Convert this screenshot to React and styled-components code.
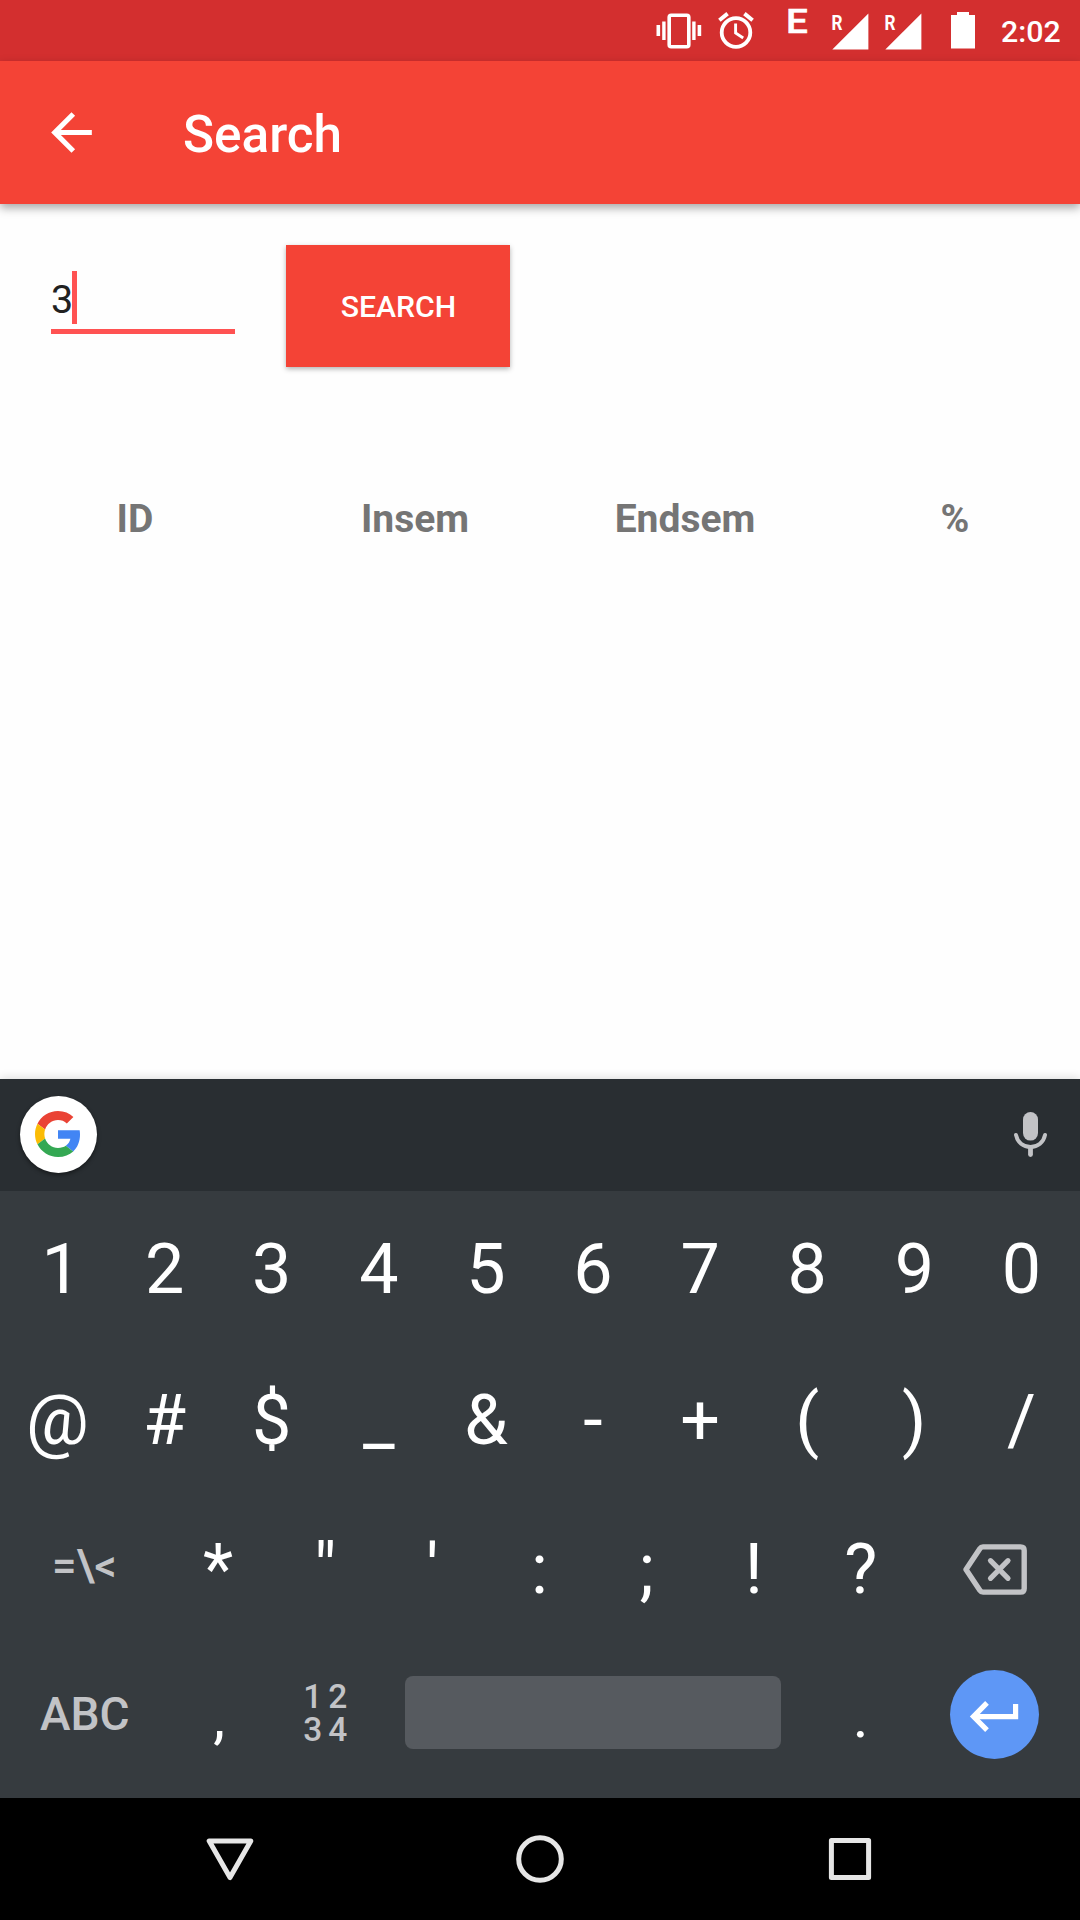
import React from "react";
import styled, { createGlobalStyle } from "styled-components";

const GlobalStyle = createGlobalStyle`
  * { box-sizing: border-box; }
  body { margin: 0; background: #fefefe; }
  svg { display: block; flex: none; overflow: visible; }
`;

const Screen = styled.div`
  width: 1080px;
  height: 1920px;
  display: flex;
  flex-direction: column;
  overflow: hidden;
  background: #fefefe;
  font-family: Roboto, "Noto Sans", sans-serif;
`;

const StatusBar = styled.header`
  height: 61px;
  flex: none;
  display: flex;
  justify-content: flex-end;
  align-items: flex-start;
  padding-right: 20px;
  background: #d32f2f;
  color: #fff;
`;

const StatusItem = styled.div`
  margin-left: ${(p) => p.$gap}px;
  padding-top: ${(p) => p.$top}px;
`;

const NetworkType = styled(StatusItem)`
  width: 22px;
  font-size: 34px;
  line-height: 40px;
  font-weight: 500;
  transform: scaleX(1.14);
  transform-origin: left;
  -webkit-text-stroke: 0.5px #fff;
`;

const Clock = styled(StatusItem)`
  width: 59px;
  font-size: 30.3px;
  line-height: 36px;
  font-weight: 500;
  white-space: nowrap;
`;

const AppBar = styled.div`
  height: 143px;
  flex: none;
  display: flex;
  align-items: center;
  padding-left: 41px;
  background: #f44336;
  color: #fff;
  box-shadow: 0 4px 9px rgba(0, 0, 0, 0.34);
`;

const Title = styled.h1`
  margin: 5px 0 0 81px;
  font-size: 51.3px;
  line-height: 60px;
  font-weight: 500;
`;

const Content = styled.main`
  flex: 1;
  display: flex;
  flex-direction: column;
  padding-top: 41px;
`;

const SearchRow = styled.div`
  display: flex;
  align-items: flex-start;
  padding-left: 51px;
`;

const Field = styled.div`
  width: 184px;
  height: 63px;
  margin: 26px 51px 0 0;
  display: flex;
  align-items: flex-start;
  border-bottom: 5px solid #ff5252;
  color: #212121;
  font-size: 39.5px;
  line-height: 57px;
`;

const Caret = styled.span`
  width: 5px;
  height: 53px;
  margin-left: -1px;
  background: #ff5252;
`;

const SearchButton = styled.button`
  width: 224px;
  height: 122px;
  padding: 2px 0 0 1px;
  border: 0;
  background: #f44336;
  color: #fff;
  font: 500 30.2px/36px Roboto, "Noto Sans", sans-serif;
  box-shadow: 0 2px 5px rgba(0, 0, 0, 0.3);
`;

const TableHead = styled.div`
  display: grid;
  grid-template-columns: repeat(4, 270px);
  margin-top: 129px;
  color: #757575;
  font-size: 39px;
  line-height: 46px;
  font-weight: 700;
  text-align: center;
`;

const HeadCell = styled.div`
  padding-left: ${(p) => (p.$first ? 0 : 20)}px;
`;

const Keyboard = styled.section`
  height: 719px;
  flex: none;
  display: flex;
  flex-direction: column;
  background: #363b3f;
  box-shadow: 0 -1px 9px rgba(0, 0, 0, 0.14);
  color: #fff;
`;

const Suggestions = styled.div`
  height: 112px;
  display: flex;
  align-items: center;
  justify-content: space-between;
  padding: 0 33px 1px 20px;
  background: #292e32;
`;

const GoogleButton = styled.div`
  width: 77px;
  height: 77px;
  display: grid;
  place-items: center;
  padding: 0 1px 1px 0;
  border-radius: 50%;
  background: #fff;
  box-shadow: 0 2px 4px rgba(0, 0, 0, 0.45);
`;

const Keys = styled.div`
  padding: 3px 0 0 4px;
`;

const KeyRow = styled.div`
  display: grid;
  grid-template-columns: repeat(20, 53.55px);
  grid-template-rows: ${(p) => p.$height || 150}px;
`;

const Key = styled.div`
  grid-column: span ${(p) => p.$span || 2};
  min-width: 0;
  display: flex;
  align-items: center;
  justify-content: center;
  padding-top: ${(p) => p.$drop || 0}px;
  padding-bottom: ${(p) => p.$lift || 0}px;
  padding-left: ${(p) => p.$shift || 0}px;
  font-size: ${(p) => p.$size || 70}px;
  font-weight: ${(p) => (p.$soft ? 500 : 400)};
  color: ${(p) => (p.$soft ? "#c2c3c6" : "#fff")};
  line-height: 1.172;
`;

const NumpadGlyph = styled.div`
  display: grid;
  grid-template-columns: 25px 19px;
  grid-auto-rows: 33.5px;
  line-height: 33.5px;
  font-size: 33.5px;
`;

const SpaceBar = styled.div`
  width: 376px;
  height: 73px;
  border-radius: 8px;
  background: #565a5f;
`;

const EnterButton = styled.div`
  width: 89px;
  height: 89px;
  display: grid;
  place-items: center;
  border-radius: 50%;
  background: #5e97f6;
`;

const EnterGlyph = styled.div`
  padding: 5px 1px 0 0;
`;

const NavBar = styled.nav`
  height: 122px;
  flex: none;
  display: grid;
  grid-template-columns: repeat(3, 310px);
  justify-content: center;
  align-items: center;
  justify-items: center;
  background: #000;
`;

const VibrateIcon = () => (
  <svg width="46" height="36" viewBox="0 0 46 36" fill="#fff">
    <rect x="13.2" y="2.2" width="19.6" height="31.6" rx="2" fill="none" stroke="#fff" strokeWidth="3.6" />
    <path d="M0.5 12h3.6v11H0.5zM6.2 8.5h3.4v18.5H6.2zM36.2 8.5h3.4v18.5h-3.4zM41.6 12h3.6v11h-3.6z" />
  </svg>
);

const AlarmIcon = () => (
  <svg width="36" height="37" viewBox="0 0 36 37" fill="none" stroke="#fff">
    <circle cx="18" cy="20.5" r="14.3" strokeWidth="3.8" />
    <path d="M1.4 8.2 9.6 1.6M34.6 8.2 26.4 1.6" strokeWidth="4" />
    <path d="M17.6 11.5v9.5l7.6 5" strokeWidth="2.9" />
  </svg>
);

const SignalIcon = () => (
  <svg width="37" height="37" viewBox="0 0 37 37" fill="#fff">
    <path d="M36.4 .5V36.6H.3z" />
    <text transform="translate(-0.6 17) scale(.84 1)" fontFamily="Roboto, sans-serif" fontSize="20.5" fontWeight="700">R</text>
  </svg>
);

const BatteryIcon = () => (
  <svg width="24" height="37" viewBox="0 0 24 37" fill="#fff">
    <path d="M6 0h12v3h6v33.6H0V3h6z" />
  </svg>
);

const BackIcon = () => (
  <svg width="61" height="61" viewBox="0 0 24 24" fill="#fff">
    <path d="M20 11H7.83l5.59-5.59L12 4l-8 8 8 8 1.41-1.41L7.83 13H20v-2z" />
  </svg>
);

const GoogleIcon = () => (
  <svg width="46" height="46" viewBox="0 0 48 48">
    <path fill="#ea4335" d="M24 9.5c3.54 0 6.71 1.22 9.21 3.6l6.85-6.85C35.9 2.38 30.47 0 24 0 14.62 0 6.51 5.38 2.56 13.22l7.98 6.19C12.43 13.72 17.74 9.5 24 9.5z" />
    <path fill="#4285f4" d="M46.98 24.55c0-1.57-.15-3.09-.38-4.55H24v9.02h12.94c-.58 2.96-2.26 5.48-4.78 7.18l7.73 6c4.51-4.18 7.09-10.36 7.09-17.65z" />
    <path fill="#fbbc05" d="M10.53 28.59c-.48-1.45-.76-2.99-.76-4.59s.27-3.14.76-4.59l-7.98-6.19C.92 16.46 0 20.12 0 24c0 3.88.92 7.54 2.56 10.78l7.97-6.19z" />
    <path fill="#34a853" d="M24 48c6.48 0 11.93-2.13 15.89-5.81l-7.73-6c-2.15 1.45-4.92 2.3-8.16 2.3-6.26 0-11.57-4.22-13.47-9.91l-7.98 6.19C6.51 42.62 14.62 48 24 48z" />
  </svg>
);

const MicIcon = () => (
  <svg width="33" height="45" viewBox="0 0 33 45" fill="none" stroke="#c2c3c6" strokeLinecap="round">
    <rect x="9" y="0" width="15" height="28.6" rx="7.5" fill="#c2c3c6" stroke="none" />
    <path d="M2 23C3.4 30.4 9.2 35 16.5 35S29.6 30.4 31 23" strokeWidth="4" />
    <path d="M16.5 36v6.6" strokeWidth="4.8" />
  </svg>
);

const BackspaceIcon = () => (
  <svg width="64" height="51" viewBox="0 0 64 51" fill="none" stroke="#c2c3c6" strokeLinecap="round" strokeLinejoin="round">
    <path d="M20 2.9H57.5Q61.2 2.9 61.2 6.6V44.4Q61.2 48.1 57.5 48.1H20Q18 48.1 16.8 46.3L3 25.5 16.8 4.7Q18 2.9 20 2.9Z" strokeWidth="5.4" />
    <path d="M27.5 16.7 45 34.3M45 16.7 27.5 34.3" strokeWidth="5.2" />
  </svg>
);

const EnterIcon = () => (
  <svg width="49" height="31" viewBox="0 0 49 31" fill="none" stroke="#fff" strokeWidth="5.2">
    <path d="M45.6 3v12.6H4.5" />
    <path d="M17 1.9 3.5 15.6 17 29.2" />
  </svg>
);

const Triangle = () => (
  <svg width="48" height="48" viewBox="0 0 48 48" fill="none" stroke="#e6e6e6" strokeWidth="5" strokeLinejoin="round">
    <path d="M3.2 5.9H44.8L24 42.6Z" />
  </svg>
);

const Circle = () => (
  <svg width="48" height="48" viewBox="0 0 48 48" fill="none" stroke="#e6e6e6" strokeWidth="5">
    <circle cx="24" cy="24" r="21.3" />
  </svg>
);

const Square = () => (
  <svg width="48" height="48" viewBox="0 0 48 48" fill="none" stroke="#e6e6e6" strokeWidth="5" strokeLinejoin="round">
    <rect x="5.4" y="5.4" width="37.2" height="37.2" />
  </svg>
);

const digits = "1234567890".split("");
const symbols = "@#$_&-+()/".split("");
const punctuation = ["*", '"', "'", ":", ";", "!", "?"];

export default function App() {
  return (
    <Screen>
      <GlobalStyle />
      <StatusBar>
        <StatusItem $gap={0} $top={13}><VibrateIcon /></StatusItem>
        <StatusItem $gap={16} $top={12}><AlarmIcon /></StatusItem>
        <NetworkType $gap={32} $top={1}>E</NetworkType>
        <StatusItem $gap={24} $top={13}><SignalIcon /></StatusItem>
        <StatusItem $gap={16} $top={13}><SignalIcon /></StatusItem>
        <StatusItem $gap={29} $top={12}><BatteryIcon /></StatusItem>
        <Clock $gap={26} $top={14}>2:02</Clock>
      </StatusBar>
      <AppBar>
        <BackIcon />
        <Title>Search</Title>
      </AppBar>
      <Content>
        <SearchRow>
          <Field>
            3<Caret />
          </Field>
          <SearchButton type="button">SEARCH</SearchButton>
        </SearchRow>
        <TableHead>
          {["ID", "Insem", "Endsem", "%"].map((name, i) => (
            <HeadCell key={name} $first={i === 0}>{name}</HeadCell>
          ))}
        </TableHead>
      </Content>
      <Keyboard>
        <Suggestions>
          <GoogleButton><GoogleIcon /></GoogleButton>
          <MicIcon />
        </Suggestions>
        <Keys>
          <KeyRow>{digits.map((c) => <Key key={c} $drop={1} $shift={c === "1" ? 7 : 0}>{c}</Key>)}</KeyRow>
          <KeyRow>{symbols.map((c) => <Key key={c} $drop={2}>{c}</Key>)}</KeyRow>
          <KeyRow>
            <Key $span={3} $soft $size={43.5} $lift={4}>{"=\\<"}</Key>
            {punctuation.map((c) => <Key key={c} $drop={1}>{c}</Key>)}
            <Key $span={3}><BackspaceIcon /></Key>
          </KeyRow>
          <KeyRow $height={140}>
            <Key $span={3} $soft $size={46} $drop={2} $shift={1}>ABC</Key>
            <Key $size={60} $drop={6} $shift={2}>,</Key>
            <Key $soft $lift={2}>
              <NumpadGlyph>
                <span>1</span><span>2</span><span>3</span><span>4</span>
              </NumpadGlyph>
            </Key>
            <Key $span={8} $lift={3}><SpaceBar /></Key>
            <Key $size={60} $drop={6}>.</Key>
            <Key $span={3}><EnterButton><EnterGlyph><EnterIcon /></EnterGlyph></EnterButton></Key>
          </KeyRow>
        </Keys>
      </Keyboard>
      <NavBar>
        <Triangle />
        <Circle />
        <Square />
      </NavBar>
    </Screen>
  );
}
